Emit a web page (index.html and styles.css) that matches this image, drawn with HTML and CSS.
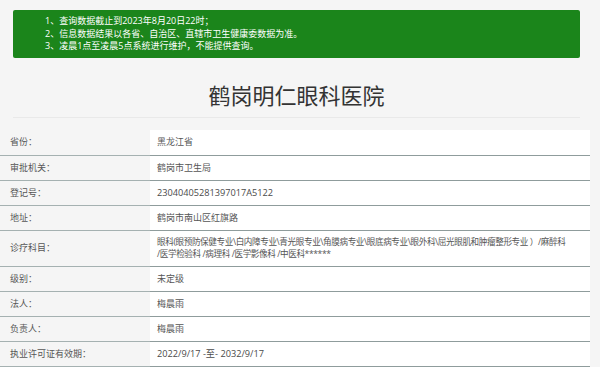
FILE: index.html
```html
<!DOCTYPE html>
<html lang="zh-CN">
<head>
<meta charset="utf-8">
<title>鹤岗明仁眼科医院</title>
<link rel="stylesheet" href="styles.css">
</head>
<body>
<div class="page">
  <div class="notice">
    <p>1、查询数据截止到2023年8月20日22时；</p>
    <p>2、信息数据结果以各省、自治区、直辖市卫生健康委数据为准。</p>
    <p>3、凌晨1点至凌晨5点系统进行维护，不能提供查询。</p>
  </div>
  <h1 class="title">鹤岗明仁眼科医院</h1>
</div>
<table class="info">
  <tr><th>省份：</th><td>黑龙江省</td></tr>
  <tr><th>审批机关：</th><td>鹤岗市卫生局</td></tr>
  <tr><th>登记号：</th><td class="num">23040405281397017A5122</td></tr>
  <tr><th>地址：</th><td>鹤岗市南山区红旗路</td></tr>
  <tr class="tall"><th>诊疗科目：</th><td class="long">眼科(眼预防保健专业\白内障专业\青光眼专业\角膜病专业\眼底病专业\眼外科\屈光眼肌和肿瘤整形专业 ）/麻醉科<br>/医学检验科 /病理科 /医学影像科 /中医科******</td></tr>
  <tr><th>级别：</th><td>未定级</td></tr>
  <tr><th>法人：</th><td>梅晨雨</td></tr>
  <tr><th>负责人：</th><td>梅晨雨</td></tr>
  <tr><th>执业许可证有效期：</th><td class="num">2022/9/17 -至- 2032/9/17</td></tr>
</table>
</body>
</html>
```
FILE: styles.css
```css
html, body {
  margin: 0;
  padding: 0;
  background: #f5f5f5;
  font-family: "Open Sans", "Noto Sans CJK SC", sans-serif;
  color: #555;
}
body {
  padding-top: 10px;
  width: 600px;
  height: 367px;
  overflow: hidden;
}
.page {
  margin: 0 20px 0 13px;
}
.notice {
  background: #1b851b;
  border-radius: 2px;
  padding: 5px 0 5px 32px;
  height: 38px;
}
.notice p {
  margin: 0;
  color: #fff;
  font-size: 9px;
  line-height: 12.5px;
  white-space: nowrap;
}
.title {
  margin: 25px 0 12px;
  padding-bottom: 12px;
  border-bottom: 1px solid #e9e9e9;
  text-align: center;
  font-weight: normal;
  font-size: 22px;
  line-height: 22px;
  color: #333;
  font-family: "Noto Sans CJK SC", sans-serif;
}
.info {
  border-collapse: collapse;
  width: 590px;
  table-layout: fixed;
}
.info tr {
  height: 25px;
}
.info tr.tall {
  height: 36px;
}
.info th, .info td {
  padding: 0;
  font-size: 9px;
  line-height: 12px;
  font-weight: normal;
  text-align: left;
  vertical-align: middle;
  border-bottom: 1px solid #8f9c9c;
}
.info th {
  width: 150px;
  padding-left: 10px;
  box-sizing: border-box;
  background: #f5f5f5;
  color: #555;
  border-bottom-color: #a5b1b1;
}
.info td {
  background: #fff;
  padding-left: 7px;
  white-space: nowrap;
  color: #555;
}
.info td.long {
  font-size: 8.6px;
  letter-spacing: -0.4px;
}
.info td.num {
  font-size: 9.2px;
  color: #4a4a4a;
}
```
